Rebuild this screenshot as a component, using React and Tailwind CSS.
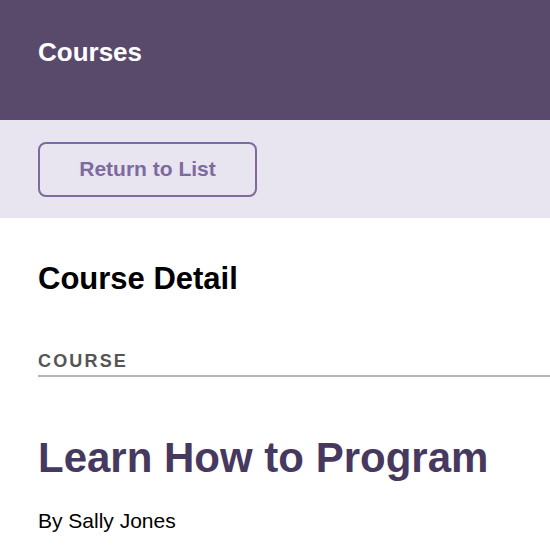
import React from "react";

export default function App() {
  return (
    <div className="min-h-[550px] bg-white font-['Liberation_Sans',Arial,sans-serif]">
      <header className="h-[120px] bg-[#594a6c] px-[38px] pt-[37px]">
        <h1 className="text-[26px] leading-[30px] font-bold text-white">Courses</h1>
      </header>

      <div className="h-[98px] bg-[#e8e4f0] flex items-center px-[38px]">
        <button className="w-[219px] h-[55px] rounded-lg border-2 border-[#7d6a9e] text-[21px] font-bold text-[#7d6a9e]">
          Return to List
        </button>
      </div>

      <div className="pl-[38px] pt-[43px]">
        <h2 className="text-[31px] leading-[36px] font-bold text-black">Course Detail</h2>

        <div className="mt-[53px] border-b-2 border-[#b4b4b4] pb-[3px]">
          <h3 className="text-[18px] leading-[22px] font-bold tracking-[0.12em] text-[#555555]">COURSE</h3>
        </div>

        <h4 className="mt-[57px] text-[42px] leading-[48px] font-bold text-[#46385e]">
          Learn How to Program
        </h4>
        <p className="mt-[27px] text-[21px] leading-[24px] text-black">By Sally Jones</p>
      </div>
    </div>
  );
}
